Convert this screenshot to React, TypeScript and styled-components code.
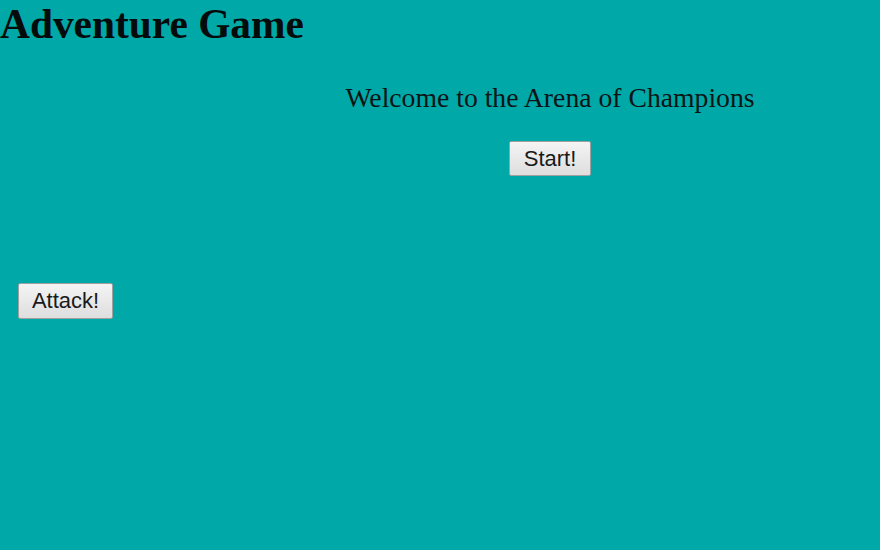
import React from "react";
import styled, { createGlobalStyle } from "styled-components";

const Global = createGlobalStyle`
  html, body { margin: 0; padding: 0; background: #00a8a8; }
  body { font-family: "Liberation Serif", "Times New Roman", serif; color: #000; }
`;

const Page = styled.div`
  width: 880px;
  height: 550px;
  background: #00a8a8;
  display: flex;
  flex-direction: column;
`;

const Title = styled.h1`
  margin: 0;
  padding-top: 2px;
  font-size: 41.4px;
  font-weight: bold;
  line-height: 44px;
  color: #050a0a;
`;

const Main = styled.div`
  display: grid;
  grid-template-columns: 220px 660px;
`;

const Side = styled.div`
  padding: 237px 0 0 18px;
`;

const Stage = styled.div`
  display: flex;
  flex-direction: column;
  align-items: center;
  padding-top: 36px;
`;

const Welcome = styled.p`
  margin: 0;
  font-size: 27.7px;
  line-height: 32px;
  color: #0a1414;
`;

const Button = styled.button<{ $w: number; $h: number }>`
  width: ${(p) => p.$w}px;
  height: ${(p) => p.$h}px;
  font-family: "Liberation Sans", Arial, sans-serif;
  font-size: 22px;
  color: #1a1a1a;
  background: linear-gradient(#f4f4f4, #dedede);
  border: 1px solid #a0a0a0;
  border-radius: 2px;
  padding: 0;
`;

const StartWrap = styled.div`
  margin-top: 27px;
`;

export default function App() {
  return (
    <Page>
      <Global />
      <Title>Adventure Game</Title>
      <Main>
        <Side>
          <Button $w={95} $h={36}>Attack!</Button>
        </Side>
        <Stage>
          <Welcome>Welcome to the Arena of Champions</Welcome>
          <StartWrap>
            <Button $w={82} $h={35}>Start!</Button>
          </StartWrap>
        </Stage>
      </Main>
    </Page>
  );
}
